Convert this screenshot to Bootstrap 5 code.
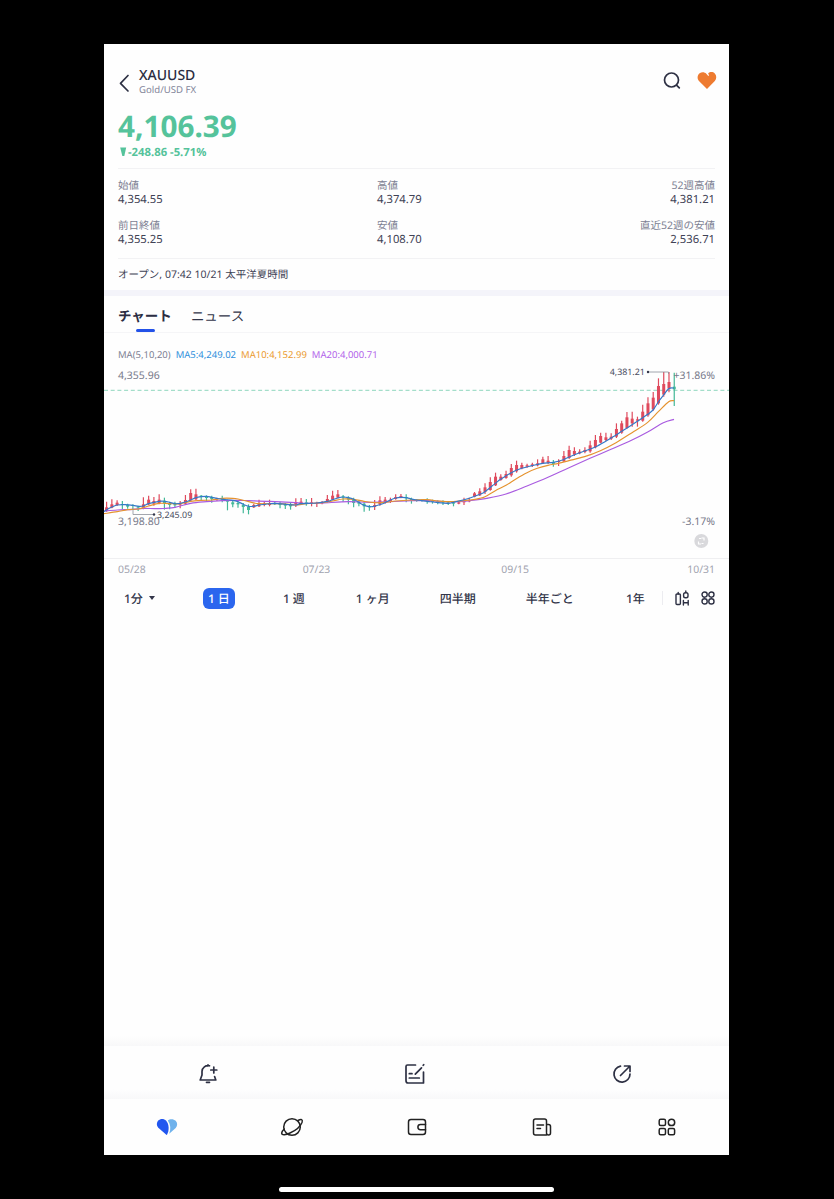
<!DOCTYPE html>
<html lang="ja">
<head>
<meta charset="utf-8">
<meta name="viewport" content="width=device-width, initial-scale=1">
<title>XAUUSD</title>
<link href="https://cdn.jsdelivr.net/npm/bootstrap@5.3.0/dist/css/bootstrap.min.css" rel="stylesheet">
<style>
body{background:#000;font-family:"Noto Sans","Noto Sans CJK JP",sans-serif;color:#33364a;height:1199px;overflow:hidden;text-rendering:geometricPrecision}
.app{width:625px;height:1111px;margin:44px 0 0 104px;background:#fefefe}
svg{display:block;overflow:visible}
.ic{fill:none;stroke:#2d3043;stroke-width:1.7;stroke-linecap:round;stroke-linejoin:round}
.top-row{height:61px;padding:21px 12px 0 14px}
.sym{font-size:14px;font-weight:500;line-height:21px;height:19px;color:#2b2d42}
.sub{font-size:9.6px;line-height:11px;color:#83869a}
.price{font-size:29.7px;font-weight:700;line-height:42px;height:40px;color:#55c39b}
.chg{font-size:11.3px;font-weight:700;line-height:15px;color:#55c39b;height:23px}
.px{padding-left:14px;padding-right:14px}
.inset{margin-left:14px;margin-right:14px}
.line-t{border-top:1px solid #f2f2f4}
.stats{height:89px;padding-top:9px;row-gap:9px;display:grid;grid-template-columns:259px 1fr 1fr;align-content:start}
.stats .k{font-size:10.5px;line-height:17px;height:15px;color:#7c7f92}
.stats .v{font-size:11.25px;line-height:14px;height:16px;color:#3f4255}
.status{font-size:10.5px;line-height:32px;height:32px;color:#3f4255}
.band{height:6px;background:#f4f4fa}
.tabs{height:37px;border-bottom:1px solid #f5f5f7;font-size:13.5px;line-height:41px;gap:19px}
.tabs .on{font-weight:700;position:relative;color:#2b2d42}
.tabs .on::after{content:"";position:absolute;left:18px;bottom:0;width:19px;height:3px;border-radius:2px;background:#2352e8}
.ma{height:29px;padding-top:10px;font-size:9.5px;line-height:24px;gap:5px;color:#7c7f92}
.chart{height:197px;border-bottom:1px solid #efeff1}
.chart text{font-size:10.5px;fill:#77798a}
.dates{height:21px;font-size:10.4px;line-height:23px;color:#a0a2ae}
.per{height:36px;font-size:12px;line-height:20px;font-weight:500;color:#33364a}
.per .lbl{padding-top:2px}
.per .sel{background:#2b66ee;color:#fff;border-radius:6px;width:32px;height:21px;line-height:21px;text-align:center}
.tri{width:0;height:0;border:3px solid transparent;border-top:4px solid #33364a;border-bottom:0;margin-left:6px}
.shade{height:10px;background:linear-gradient(#fefefe,#f8f8f9)}
.tools{height:43px;width:622px}
.bnav{height:56px}
.homebar{width:275px;height:5px;border-radius:3px;background:#fff;margin:32px 0 0 279px}
</style>
</head>
<body>
<main class="app d-flex flex-column">
  <header class="top-row d-flex">
    <svg class="ic" width="12" height="20" viewBox="0 0 12 20" style="margin-top:8px;stroke-width:1.7"><path d="M10 2.500 2.500 10.300 10 18"/></svg>
    <div style="margin-left:9px"><div class="sym">XAUUSD</div><div class="sub">Gold/USD FX</div></div>
    <div class="ms-auto d-flex" style="padding-top:6px;gap:16px">
      <svg class="ic" width="19" height="19" viewBox="0 0 19 19"><circle cx="9.500" cy="9" r="7"/><path d="m14.700 14.300 2.600 2.600"/></svg>
      <svg width="20" height="19" viewBox="0 0 20 19"><path fill="#ee7b30" d="M10 18 2.200 10.200C-.1 7.800.2 4 2.600 2.200 4.800.700 7.700 1 9.300 2.700l2 2.200.8-.7-1-1.800C13 .5 16 .6 17.800 2.500c2 2.100 1.900 5.500 0 7.600z"/></svg>
    </div>
  </header>
  <section class="px price">4,106.39</section>
  <section class="px chg d-flex"><svg width="10" height="14" viewBox="0 0 10 14"><path fill="#55c39b" d="M2.200 2.500h6L6.300 11h-2z"/></svg>-248.86 -5.71%</section>
  <div class="inset line-t" style="height:1px"></div>
  <section class="px stats">
    <div><div class="k">始値</div><div class="v">4,354.55</div></div>
    <div><div class="k">高値</div><div class="v">4,374.79</div></div>
    <div class="text-end"><div class="k">52週高値</div><div class="v">4,381.21</div></div>
    <div><div class="k">前日終値</div><div class="v">4,355.25</div></div>
    <div><div class="k">安値</div><div class="v">4,108.70</div></div>
    <div class="text-end"><div class="k">直近52週の安値</div><div class="v">2,536.71</div></div>
  </section>
  <section class="inset line-t status">オープン, 07:42 10/21 太平洋夏時間</section>
  <div class="band"></div>
  <nav class="px tabs d-flex"><div class="on">チャート</div><div>ニュース</div></nav>
  <div class="px ma d-flex"><span>MA(5,10,20)</span><span style="color:#2e8fdc">MA5:4,249.02</span><span style="color:#eb9a2e">MA10:4,152.99</span><span style="color:#b263ea">MA20:4,000.71</span></div>
  <section class="chart">
    <svg id="plot" width="625" height="196" viewBox="104 362 625 196">
      <path d="M104 390.300H729" stroke="#8ed6bd" stroke-dasharray="4 2.700" fill="none"/>
      <g id="candles"></g><g id="averages" fill="none" stroke-width="1.150" stroke-linejoin="round"></g>
      <path d="M133 509v5.500h20.500M648 372h20.500v2" stroke="#8b8f99" stroke-width=".8" fill="none"/>
      <circle cx="154" cy="514.500" r="1.200" fill="#33364a"/><circle cx="648" cy="372" r="1.200" fill="#33364a"/>
      <text x="118" y="379.400">4,355.96</text><text x="118" y="525">3,198.80</text>
      <text x="715" y="379.400" text-anchor="end">+31.86%</text><text x="715" y="525" text-anchor="end">-3.17%</text>
      <text x="157" y="518.400" style="font-size:8.900px;fill:#4a4d5e">3,245.09</text><text x="609.700" y="375.400" style="font-size:8.900px;fill:#4a4d5e">4,381.21</text>
      <circle cx="701.300" cy="541" r="7" fill="#d9d9dc"/><path d="M698.500 541.500v2.500h2.500M704 540.500V538h-2.500M699 538.500h2.200M703.500 543.500h-2" fill="none" stroke="#fff" stroke-width="1.200"/>
    </svg>
  </section>
  <div class="px dates d-flex"><span>05/28</span><span style="margin-left:157px">07/23</span><span style="margin-left:171px">09/15</span><span class="ms-auto">10/31</span></div>
  <nav class="per d-flex align-items-center" style="padding:0 14px 0 20px">
    <span class="lbl">1分</span><i class="tri"></i>
    <span class="sel" style="margin-left:48px">1 日</span>
    <span class="lbl" style="margin-left:48px">1 週</span>
    <span class="lbl" style="margin-left:51px">1 ヶ月</span>
    <span class="lbl" style="margin-left:50px">四半期</span>
    <span class="lbl" style="margin-left:50px">半年ごと</span>
    <span class="lbl" style="margin-left:52px">1年</span>
    <span class="ms-auto" style="width:1px;height:14px;background:#ececf0"></span>
    <svg class="ic" style="margin-left:12px;stroke-width:1.400" width="14" height="17" viewBox="0 0 14 17"><rect x="1" y="4" width="4.400" height="10.500" rx="1"/><path d="M3.200 2.500v1.500M10.800 1v1.500M8.400 15v-4.500M13.200 15v-4.500M8.400 12.800h4.800"/><rect x="8.600" y="2.800" width="4.400" height="5" rx="1.800"/></svg>
    <svg class="ic" style="margin-left:12px;stroke-width:1.400" width="14" height="14" viewBox="0 0 14 14"><circle cx="3.600" cy="3.600" r="2.600"/><circle cx="10.400" cy="3.600" r="2.600"/><circle cx="3.600" cy="10.400" r="2.600"/><circle cx="10.400" cy="10.400" r="2.600"/></svg>
  </nav>
  <div class="mt-auto shade"></div>
  <nav class="tools row g-0 align-items-center">
    <div class="col d-flex justify-content-center"><svg class="ic" width="22" height="22" viewBox="0 0 22 22" style="margin-top:12px"><path d="M12.500 2.800A6 6 0 0 0 5 8.500V12L3.200 17H18.800L17.600 13.500M11 1.800v1M9.500 19.300h3M16.800 4v6M13.800 7h6"/></svg></div>
    <div class="col d-flex justify-content-center"><svg class="ic" width="22" height="22" viewBox="0 0 22 22" style="margin-top:12px"><path d="M11.500 2H3.500Q2 2 2 3.500V17.500Q2 20 4 20H19.500V9M19.700 1.700l-.5.600M17.500 4.800l-6.200 6.400M5.300 10.700H8M5.300 15h10"/></svg></div>
    <div class="col d-flex justify-content-center"><svg class="ic" width="22" height="22" viewBox="0 0 22 22" style="margin-top:12px"><path d="M9.500 3.200A8 8 0 1 0 19 11M9.500 12.500l9-9M13.500 3H19V8.500"/></svg></div>
  </nav>
  <div class="shade"></div>
  <nav class="bnav row g-0 align-items-center">
    <div class="col d-flex justify-content-center"><svg width="22" height="18" viewBox="0 0 22 18"><path fill="#2156ef" d="M10.600 17 2.300 9.800C.3 8 .4 4.500 2.200 2.600 4.400.5 8 .5 10.200 2.800c3 3.500 3.200 9.500.8 14z"/><path fill="#6fb2ec" d="M11.800 2.600C13.700.7 17.500.6 19.700 2.800c2 2.100 1.900 5.100 0 7.100l-6.500 5.800c1.800-4.500 1.500-9-1.400-13.100z"/></svg></div>
    <div class="col d-flex justify-content-center"><svg class="ic" width="22" height="20" viewBox="0 0 22 20" style="stroke:#222;stroke-width:1.500"><circle cx="11" cy="10" r="8.300"/><path d="M17 3.500c3.500-2 5-1 4 2C19.300 9.700 14.500 13.600 9 16c-4 1.900-8.500 2.500-8.300 0 .1-1.200 1-2.600 2.500-4"/></svg></div>
    <div class="col d-flex justify-content-center"><svg class="ic" width="20" height="20" viewBox="0 0 20 20" style="stroke:#222;stroke-width:1.500"><rect x="1.500" y="2.500" width="17" height="15" rx="2.500"/><path d="M18.500 7.500H13.500a2.500 2.500 0 0 0 0 5.200h5"/></svg></div>
    <div class="col d-flex justify-content-center"><svg class="ic" width="20" height="20" viewBox="0 0 20 20" style="stroke:#222;stroke-width:1.500"><path d="M14.500 18H3.500Q1.500 18 1.500 16V4Q1.500 2 3.500 2h9Q14.500 2 14.500 4V15.500M14.500 7.500H16.500Q18.500 7.500 18.500 9.500V16q0 2-2 2t-2-2M5 8h6.500M5 11.500h3.500"/></svg></div>
    <div class="col d-flex justify-content-center"><svg class="ic" width="18" height="18" viewBox="0 0 18 18" style="stroke:#222;stroke-width:1.500"><rect x="1.200" y="1.200" width="6.300" height="6.300" rx="1.500"/><circle cx="13.500" cy="4.400" r="3.200"/><rect x="1.200" y="10.500" width="6.300" height="6.300" rx="1.500"/><rect x="10.300" y="10.500" width="6.300" height="6.300" rx="1.500"/></svg></div>
  </nav>
</main>
<div class="homebar"></div>
<script src="https://cdn.jsdelivr.net/npm/bootstrap@5.3.0/dist/js/bootstrap.bundle.min.js"></script>
<script>
// Each candle: direction, high, body top, body bottom, low, in thirds of a pixel below y = 475.
const data = `r80,97,107,110 r73,88,98,100 r76,83,90,93 g78,87,89,103 g86,90,95,101 g88,90,92,105 g92,95,98,108 r67,88,98,103 r62,74,88,91 r66,78,86,92 r58,74,84,88 g68,77,84,104 g80,84,90,103 g80,86,91,98 r78,85,89,100 r60,75,86,90 r43,54,76,78 r41,58,73,76 g60,62,66,76 g61,63,69,78 g62,66,72,83 r68,70,73,78 g62,69,74,82 g74,76,80,106 g76,82,88,97 g78,84,88,98 g84,90,96,115 g88,95,105,118 r86,90,97,99 r74,84,94,96 r78,85,90,94 r74,84,90,94 g80,84,88,90 g80,84,90,100 g84,87,92,102 g84,90,94,104 r70,82,88,96 r69,80,86,90 g72,82,85,92 r69,82,85,94 r80,84,87,96 r78,82,85,88 r60,72,81,83 r47,62,74,76 r45,58,68,70 g60,64,68,80 g64,68,74,88 g68,74,84,97 g76,80,86,94 g82,86,94,110 g90,93,97,107 r75,90,96,105 r64,76,88,92 r66,74,82,86 r68,74,80,84 r58,66,72,74 r57,63,68,70 g58,66,70,82 g68,72,75,86 g72,74,76,80 g72,75,78,80 g70,76,80,86 g74,78,81,86 g76,79,82,88 g76,80,83,90 g78,82,85,90 g80,83,86,94 r80,82,86,88 r68,78,82,90 r68,76,79,82 r51,55,65,67 r40,49,61,63 r25,37,51,57 r7,21,45,47 r-7,5,31,33 r-2,5,15,17 r-13,-3,9,11 r-33,-21,1,5 r-43,-30,-11,-7 r-37,-30,-20,-17 r-34,-29,-25,-22 r-37,-32,-27,-24 r-47,-35,-29,-26 r-55,-47,-36,-33 r-57,-43,-37,-33 g-45,-39,-33,-25 r-47,-42,-39,-27 r-72,-57,-41,-39 r-88,-75,-51,-48 r-83,-72,-61,-57 r-77,-70,-65,-62 r-83,-75,-69,-65 r-103,-89,-71,-67 r-120,-105,-83,-80 r-127,-117,-97,-95 r-127,-113,-105,-101 r-125,-115,-109,-105 r-155,-138,-115,-111 r-163,-155,-127,-124 r-189,-173,-141,-139 r-190,-169,-155,-145 r-175,-167,-163,-145 r-211,-190,-163,-160 r-233,-215,-179,-175 r-249,-232,-197,-193 r-290,-267,-215,-211 r-309,-273,-241,-235 r-309,-279,-259,-248 g-307,-265,-257,-207`.split(' ');
const y = u => (475 + u / 3).toFixed(2);
document.getElementById('candles').innerHTML = data.map((d, i) => {
  const [h, t, b, l] = d.slice(1).split(',').map(Number), x = 106.6 + 5.256 * i, c = d[0] === 'r' ? '#df4a5d' : '#43b898';
  return `<path d="M${x} ${y(h)}V${y(l)}" stroke="${c}" stroke-width="1.2"/><rect x="${x - 1.5}" y="${y(t)}" width="3" height="${Math.max(1, (b - t) / 3)}" fill="${c}"/>`;
}).join('');
// Moving averages: x in thirds of a pixel from 100, y in the candle unit.
const lines = {
'#a95be0': '12,108 52,105 99,103 130,100 178,101 225,97 272,85 320,80 367,77 414,76 446,77 509,79 587,83 619,85 666,84 745,80 808,82 871,80 934,77 982,77 1045,80 1076,80 1110,77 1160,70 1218,57 1281,33 1344,7 1407,-22 1470,-50 1533,-77 1596,-105 1643,-129 1690,-157 1722,-167',
'#e5932f': '12,116 52,110 83,104 115,102 146,93 178,85 209,86 241,86 272,79 304,76 335,75 367,70 398,70 414,72 446,80 477,86 541,86 587,90 619,86 666,83 698,78 729,72 761,73 792,79 823,83 855,82 887,78 934,75 982,74 1014,78 1060,80 1110,75 1139,70 1155,65 1186,47 1218,31 1249,11 1281,-7 1312,-20 1344,-29 1375,-35 1407,-43 1454,-55 1501,-73 1548,-97 1596,-127 1643,-158 1675,-190 1706,-220 1722,-223',
'#3478c8': '12,110 20,104 36,96 52,90 75,89 99,91 115,94 130,93 146,86 178,79 194,79 209,82 225,86 241,85 256,81 272,75 288,68 304,65 320,64 335,67 351,70 370,73 398,76 414,80 430,88 446,94 461,94 477,90 493,88 525,85 557,88 587,90 603,86 650,84 682,79 698,74 713,69 729,66 745,68 761,73 776,82 792,91 808,95 823,94 839,89 855,83 871,75 887,69 902,67 918,68 934,72 950,75 982,79 1014,83 1045,85 1060,82 1110,69 1139,58 1155,50 1186,25 1202,13 1234,-7 1265,-20 1296,-28 1328,-35 1360,-38 1390,-46 1422,-60 1454,-72 1486,-84 1517,-101 1548,-120 1580,-140 1612,-161 1643,-182 1659,-195 1675,-219 1690,-239 1706,-259 1722,-261'};
// Smooth curve through the points (Catmull-Rom converted to cubic Béziers).
const curve = s => {
  const p = s.split(' ').map(q => { const [a, b] = q.split(','); return [100 + a / 3, 475 + b / 3]; });
  let d = 'M' + p[0];
  for (let i = 0; i < p.length - 1; i++) {
    const a = p[i - 1] || p[i], b = p[i], c = p[i + 1], e = p[i + 2] || c;
    d += `C${[b[0] + (c[0] - a[0]) / 6, b[1] + (c[1] - a[1]) / 6, c[0] - (e[0] - b[0]) / 6, c[1] - (e[1] - b[1]) / 6, ...c].map(v => v.toFixed(2))}`;
  }
  return d;
};
document.getElementById('averages').innerHTML = Object.entries(lines).map(([c, s]) => `<path stroke="${c}" d="${curve(s)}"/>`).join('');
</script>
</body>
</html>
